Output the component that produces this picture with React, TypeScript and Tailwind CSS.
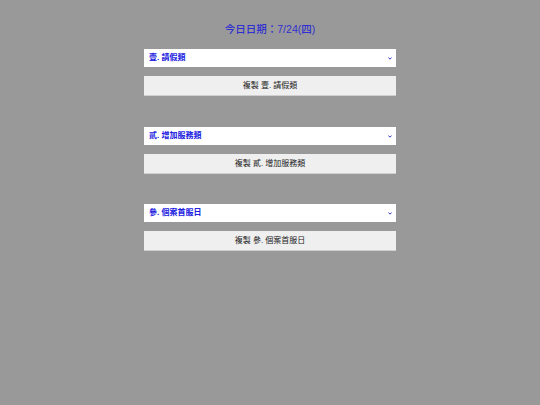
import React from 'react';

const groups = ['壹. 請假類', '貳. 增加服務類', '參. 個案首服日'];

const font = { fontFamily: '"Liberation Sans", "Noto Sans CJK TC", sans-serif' };

function Chevron() {
  return (
    <svg width="4" height="3" viewBox="0 0 4 3" className="absolute right-[4px] top-[8px] pointer-events-none">
      <path d="M0.4 0.5 L2 2.2 L3.6 0.5" fill="none" stroke="#3535c8" strokeWidth="1" />
    </svg>
  );
}

export default function App() {
  return (
    <div className="min-h-[405px] w-full bg-[#999999] flex flex-col items-center" style={font}>
      <h1 className="mt-[21px] text-[10.5px] leading-[16px] text-[#3030d0] font-medium">今日日期：7/24(四)</h1>

      <div className="mt-[12px] w-[252px] flex flex-col gap-[30.5px]">
        {groups.map(g => (
          <div key={g} className="flex flex-col gap-[9px]">
            <div className="relative h-[18px] bg-white">
              <select
                className="appearance-none block w-full h-[18px] min-h-0 p-0 pl-[5px] leading-[18px] bg-white text-[8px] font-bold text-[#2020e0] outline-none"
                defaultValue={g}
              >
                <option value={g}>{g}</option>
              </select>
              <Chevron />
            </div>
            <button className="h-[20px] bg-[#efefef] border-b border-[#cfcfcf] text-[8px] leading-[20px] text-[#222]">
              複製 {g}
            </button>
          </div>
        ))}
      </div>
    </div>
  );
}
